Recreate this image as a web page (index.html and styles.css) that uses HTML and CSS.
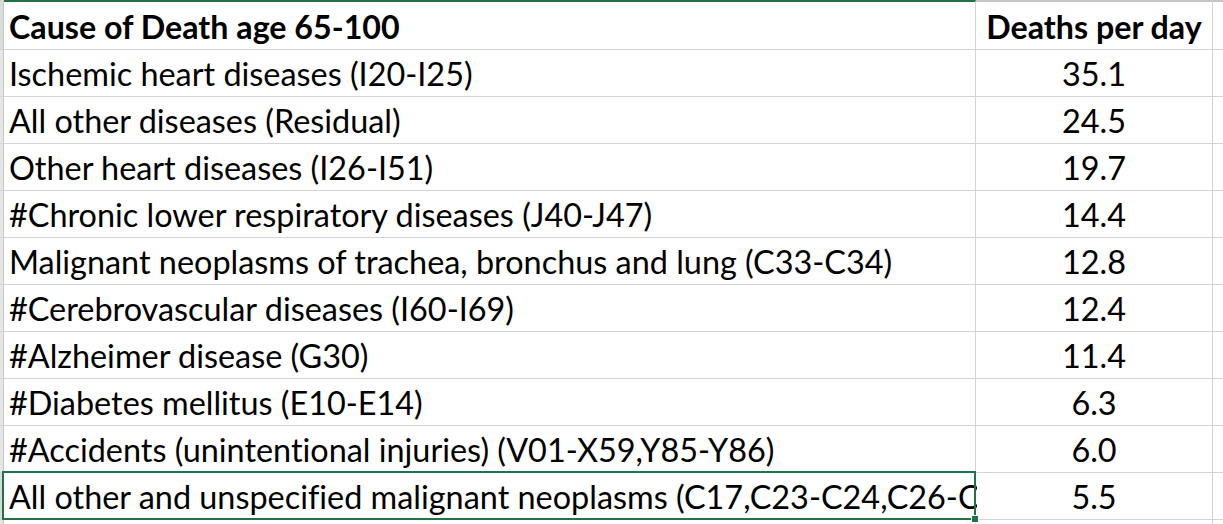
FILE: index.html
```html
<!DOCTYPE html>
<html>
<head>
<meta charset="utf-8">
<link rel="stylesheet" href="styles.css">
</head>
<body>
<div class="sheet">
  <div class="row head">
    <div class="rh"></div>
    <div class="c a sel-col">Cause of Death age 65-100</div>
    <div class="c b">Deaths per day</div>
    <div class="c x"></div>
  </div>
  <div class="row"><div class="rh"></div><div class="c a">Ischemic heart diseases (I20-I25)</div><div class="c b">35.1</div><div class="c x"></div></div>
  <div class="row"><div class="rh"></div><div class="c a">All other diseases (Residual)</div><div class="c b">24.5</div><div class="c x"></div></div>
  <div class="row"><div class="rh"></div><div class="c a">Other heart diseases (I26-I51)</div><div class="c b">19.7</div><div class="c x"></div></div>
  <div class="row"><div class="rh"></div><div class="c a">#Chronic lower respiratory diseases (J40-J47)</div><div class="c b">14.4</div><div class="c x"></div></div>
  <div class="row"><div class="rh"></div><div class="c a">Malignant neoplasms of trachea, bronchus and lung (C33-C34)</div><div class="c b">12.8</div><div class="c x"></div></div>
  <div class="row"><div class="rh"></div><div class="c a">#Cerebrovascular diseases (I60-I69)</div><div class="c b">12.4</div><div class="c x"></div></div>
  <div class="row"><div class="rh"></div><div class="c a">#Alzheimer disease (G30)</div><div class="c b">11.4</div><div class="c x"></div></div>
  <div class="row"><div class="rh"></div><div class="c a">#Diabetes mellitus (E10-E14)</div><div class="c b">6.3</div><div class="c x"></div></div>
  <div class="row"><div class="rh"></div><div class="c a">#Accidents (unintentional injuries) (V01-X59,Y85-Y86)</div><div class="c b">6.0</div><div class="c x"></div></div>
  <div class="row"><div class="rh sel-rh"></div><div class="c a active"><span class="txt">All other and unspecified malignant neoplasms (C17,C23-C24,C26-C31</span><span class="handle"></span></div><div class="c b">5.5</div><div class="c x"></div></div>
  <div class="row tail"><div class="rh"></div><div class="c a"></div><div class="c b"></div><div class="c x"></div></div>
</div>
</body>
</html>
```
FILE: styles.css
```css
html, body {
  margin: 0;
  padding: 0;
  background: #ffffff;
}
.sheet {
  width: 1223px;
  height: 524px;
  overflow: hidden;
  font-family: "Lato", "Liberation Sans", sans-serif;
  font-variant-ligatures: none;
  color: #000000;
}
.row {
  display: flex;
  height: 47px;
}
.row.head {
  height: 50px;
}
.row.tail {
  height: 10px;
}
.rh, .c {
  box-sizing: border-box;
  border-right: 1px solid #d4d4d4;
  border-bottom: 1px solid #d4d4d4;
  flex: none;
}
.rh {
  width: 4px;
  background: #e6e6e6;
  border-right-color: #c8c8c8;
}
.head .rh {
  background: #d6ded8;
  border-top: 2px solid #cfd8d2;
}
.rh.sel-rh {
  background: #d2dcd5;
  border-right: 2px solid #217346;
}
.c {
  font-size: 32.4px;
  line-height: 41px;
  padding-top: 3px;
  white-space: nowrap;
  overflow: hidden;
}
.a {
  width: 972px;
  padding-left: 5px;
}
.b {
  width: 237px;
  text-align: center;
}
.x {
  flex: 1;
  border-right: none;
}
.head .c {
  font-weight: 700;
  font-size: 32.2px;
  padding-top: 4px;
  border-top: 2px solid #c6c6c6;
}
.head .c.sel-col {
  border-top-color: #217346;
}
.active {
  position: relative;
  overflow: visible;
}
.active .txt {
  display: block;
  overflow: hidden;
  width: 968px;
}
.active::after {
  content: "";
  position: absolute;
  left: -2px;
  top: -2px;
  right: -1px;
  bottom: -1px;
  border: 2px solid #217346;
  pointer-events: none;
}
.handle {
  position: absolute;
  right: -3px;
  bottom: -3px;
  width: 6px;
  height: 6px;
  background: #217346;
  box-shadow: 0 0 0 1px #ffffff;
  z-index: 2;
}
```
